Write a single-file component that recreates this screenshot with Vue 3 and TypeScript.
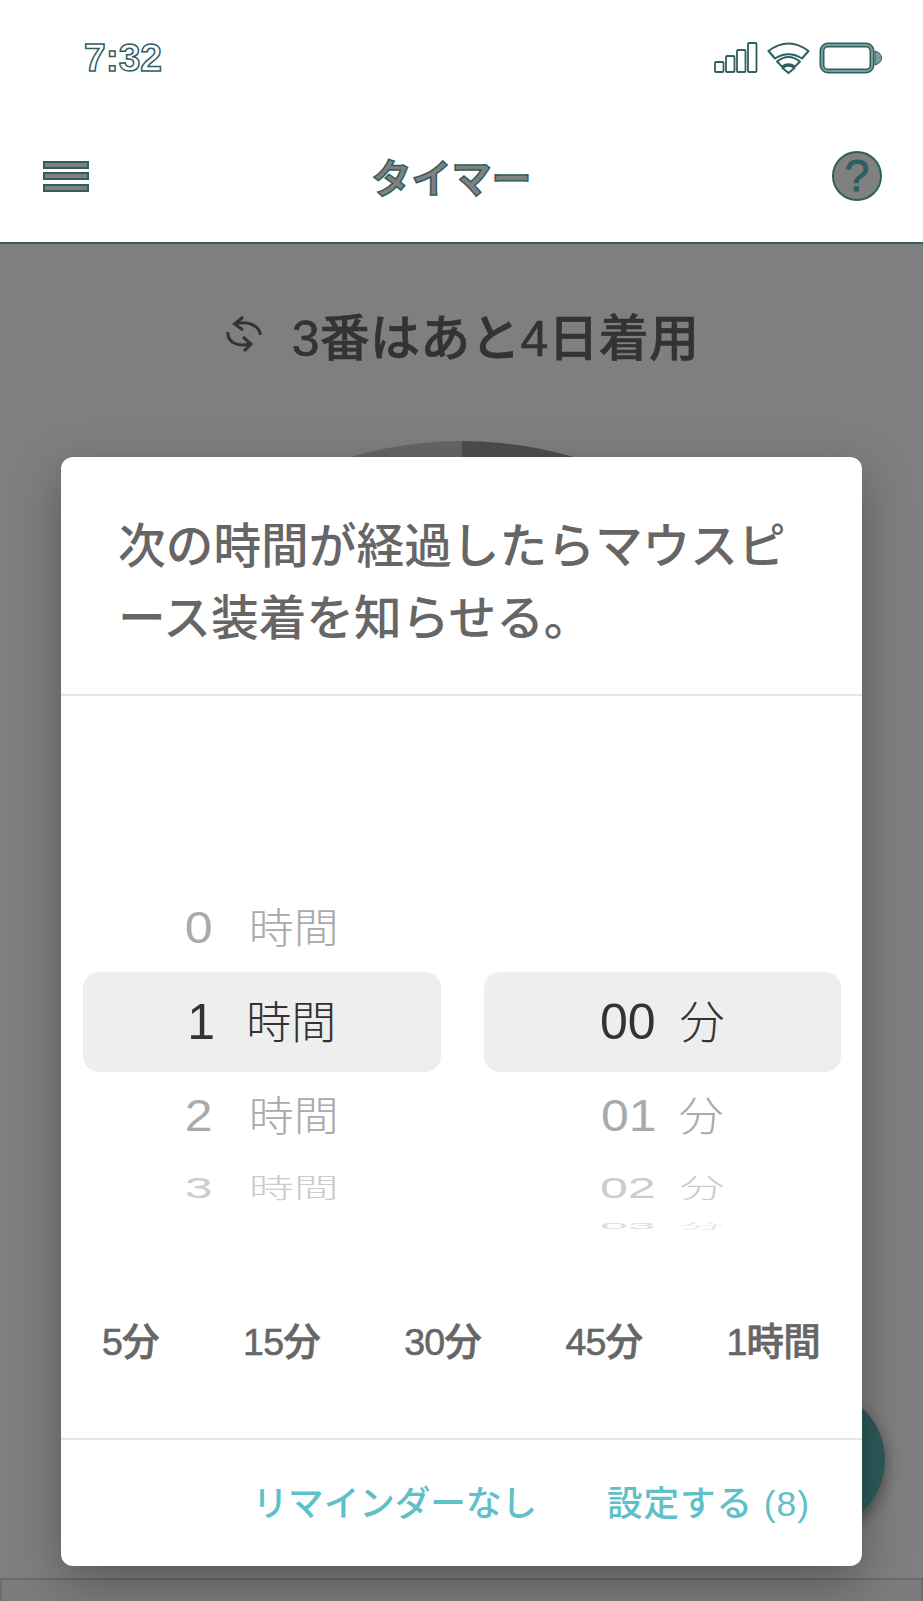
<script setup lang="ts">
type Row = { num: string; unit: string; cls: string };

const hours: Row[] = [
  { num: "", unit: "", cls: "far" },
  { num: "0", unit: "時間", cls: "near" },
  { num: "1", unit: "時間", cls: "sel" },
  { num: "2", unit: "時間", cls: "near" },
  { num: "3", unit: "時間", cls: "far" },
  { num: "", unit: "", cls: "edge" },
];

const minutes: Row[] = [
  { num: "", unit: "", cls: "far" },
  { num: "", unit: "", cls: "near" },
  { num: "00", unit: "分", cls: "sel" },
  { num: "01", unit: "分", cls: "near" },
  { num: "02", unit: "分", cls: "far" },
  { num: "03", unit: "分", cls: "edge" },
];

const presets: string[] = ["5分", "15分", "30分", "45分", "1時間"];
</script>

<template>
  <main class="page">
    <div class="status">
      <span class="time">7:32</span>
      <div class="status-icons">
        <svg width="44" height="31" viewBox="0 0 44 31">
          <g fill="#fff" stroke="#2f5f5f" stroke-width="1.8">
            <rect x="1" y="20" width="8.5" height="10" rx="1" />
            <rect x="12" y="14" width="8.5" height="16" rx="1" />
            <rect x="23" y="8" width="8.5" height="22" rx="1" />
            <rect x="34" y="1" width="8.5" height="29" rx="1" />
          </g>
        </svg>
        <svg width="43" height="32" viewBox="0 0 43 32">
          <g fill="#fff" stroke="#2f5f5f" stroke-width="2" stroke-linejoin="round">
            <path d="M1.5 9 Q21.5 -6 41.5 9 L35 16.5 Q21.5 8 8 16.5 Z" />
            <path d="M10 19.5 Q21.5 10.5 33 19.5 L28 24.5 Q21.5 20 15 24.5 Z" />
            <path d="M15.5 26 Q21.5 21.5 27.5 26 L21.5 31 Z" />
          </g>
        </svg>
        <svg width="63" height="32" viewBox="0 0 63 32">
          <rect x="3" y="3" width="50" height="26" rx="6" fill="#fff" stroke="#2f5f5f" stroke-width="5" />
          <rect x="3" y="3" width="50" height="26" rx="6" fill="none" stroke="#7a9e9e" stroke-width="2" />
          <path d="M56 9 Q62.5 11 62.5 16 Q62.5 21 56 23 Z" fill="#7a9e9e" stroke="#2f5f5f" stroke-width="1" />
        </svg>
      </div>
    </div>

    <header class="nav">
      <div class="burger"><i></i><i></i><i></i></div>
      <h1 class="nav-title">タイマー</h1>
      <div class="help">?</div>
    </header>

    <section class="content">
      <div class="wear">
        <svg class="wear-icon" width="36" height="38" viewBox="0 0 36 38" fill="none" stroke="#666" stroke-width="3">
          <path d="M9 9 C20 6 33 9 34.5 20" />
          <path d="M17 2 L8.5 9 L17 15" />
          <path d="M2 17 C1 28 13 32 24 29" />
          <path d="M17 22 L25 29 L18 36" />
        </svg>
        <span>3番はあと4日着用</span>
      </div>
      <div class="dial"></div>
    </section>

    <div class="fab"></div>
    <div class="bottom-bar"></div>
    <div class="scrim"></div>

    <div class="modal">
      <p class="modal-text">次の時間が経過したらマウスピース装着を知らせる。</p>
      <div class="picker">
        <div v-for="(col, i) in [hours, minutes]" :key="i" class="wheel">
          <div v-for="(row, j) in col" :key="j" class="row" :class="row.cls">
            <div class="row-inner" :class="'col' + i">
              <span class="num">{{ row.num }}</span><span class="unit">{{ row.unit }}</span>
            </div>
          </div>
        </div>
      </div>
      <div class="presets">
        <span v-for="p in presets" :key="p">{{ p }}</span>
      </div>
      <div class="actions">
        <span>リマインダーなし</span>
        <span class="confirm">設定する (8)</span>
      </div>
    </div>
  </main>
</template>

<style scoped>
.page {
  position: relative;
  width: 923px;
  height: 1601px;
  overflow: hidden;
  background: #fff;
  font-family: "Liberation Sans", "Noto Sans CJK JP", sans-serif;
}

.status {
  height: 100px;
  display: flex;
  justify-content: space-between;
  padding: 42px 41px 0 84px;
  box-sizing: border-box;
}
.time {
  font-weight: 700;
  font-size: 39px;
  line-height: 32px;
  color: #fff;
  -webkit-text-stroke: 1.5px #2f5f5f;
}
.status-icons {
  display: flex;
  gap: 9px;
  align-items: flex-start;
}

.nav {
  height: 144px;
  box-sizing: border-box;
  border-bottom: 2px solid #2f5f5f;
  display: flex;
  align-items: center;
  justify-content: space-between;
  padding: 10px 41px 0 43px;
}
.burger {
  width: 46px;
  display: flex;
  flex-direction: column;
  gap: 3.5px;
}
.burger i {
  display: block;
  height: 8px;
  background: #808080;
  border: 2px solid #2f5f5f;
  box-sizing: border-box;
}
.nav-title {
  margin: 0 18px 0 0;
  font-size: 40px;
  font-weight: 700;
  color: #808080;
  -webkit-text-stroke: 1.5px #2f5f5f;
}
.help {
  width: 50px;
  height: 50px;
  border-radius: 50%;
  background: #808080;
  border: 2px solid #2f5f5f;
  box-sizing: border-box;
  color: #2f5f5f;
  font-size: 44px;
  line-height: 46px;
  text-align: center;
  -webkit-text-stroke: 1px #2f5f5f;
}

.content {
  padding-top: 60px;
}
.wear {
  display: flex;
  align-items: center;
  justify-content: center;
  gap: 30px;
  height: 60px;
  font-size: 50px;
  font-weight: 500;
  color: #666;
  padding-left: 2px;
}
.wear span {
  letter-spacing: 0.2px;
  -webkit-text-stroke: 0.6px #666;
}
.dial {
  width: 800px;
  height: 800px;
  border-radius: 50%;
  margin: 77px 0 0 62px;
  background: linear-gradient(90deg, #cdcdcd 50%, #9a9a9a 50%);
}

.fab {
  position: absolute;
  left: 745px;
  top: 1390px;
  width: 140px;
  height: 140px;
  border-radius: 50%;
  background: #5ab4b4;
  box-shadow: 0 6px 16px rgba(0, 0, 0, 0.4);
}
.bottom-bar {
  position: absolute;
  left: 0;
  right: 0;
  top: 1578px;
  bottom: 0;
  background: #f8f8f8;
  border: 2px solid #d8d8d8;
  border-bottom: 0;
  box-sizing: border-box;
}
.scrim {
  position: absolute;
  inset: 244px 0 0 0;
  background: rgba(0, 0, 0, 0.5);
}

.modal {
  position: absolute;
  left: 61px;
  top: 457px;
  width: 801px;
  height: 1109px;
  background: #fff;
  border-radius: 12px;
  box-shadow: 0 16px 50px rgba(0, 0, 0, 0.3);
  display: flex;
  flex-direction: column;
}
.modal-text {
  margin: 0;
  height: 239px;
  box-sizing: border-box;
  padding: 50px 54px 0 57px;
  border-bottom: 2px solid #e6e6e6;
  font-family: "Noto Sans CJK JP", sans-serif;
  font-size: 47.7px;
  line-height: 72px;
  font-weight: 500;
  color: #666;
}

.picker {
  display: flex;
  gap: 43px;
  padding: 132px 21px 0 22px;
  height: 599px;
  box-sizing: border-box;
}
.wheel {
  flex: 1;
}
.row {
  display: flex;
  align-items: center;
  justify-content: center;
  color: #333;
}
.row-inner {
  display: flex;
  align-items: center;
  justify-content: center;
}
.num {
  font-size: 50px;
  line-height: 1;
}
.unit {
  font-family: "Noto Sans CJK JP", sans-serif;
  font-size: 45px;
  line-height: 1;
  font-weight: 300;
  margin-bottom: 5px;
}
.col0 .num {
  margin-right: 36px;
}
.col1 .num {
  margin-right: 24px;
}
.sel .col0 .num {
  margin-right: 31px;
}
.near .col1 .num {
  margin-right: 22px;
}
.sel {
  height: 100px;
  background: #eee;
  border-radius: 16px;
}
.near {
  height: 88px;
  color: #aaa;
}
.near .row-inner {
  transform: scaleY(0.9);
}
.far {
  height: 56px;
  color: #ccc;
}
.far .row-inner {
  transform: scaleY(0.6);
}
.edge {
  height: 20px;
  color: #ddd;
}
.edge .row-inner {
  transform: scaleY(0.18);
}

.presets {
  display: flex;
  justify-content: space-between;
  align-items: center;
  height: 86px;
  padding: 0 42px 0 41px;
  font-size: 37.5px;
  font-weight: 500;
  letter-spacing: -0.8px;
  color: #666;
  -webkit-text-stroke: 0.6px #666;
}

.actions {
  margin-top: auto;
  height: 128px;
  box-sizing: border-box;
  border-top: 2px solid #e6e6e6;
  display: flex;
  align-items: center;
  justify-content: flex-end;
  gap: 70px;
  padding: 0 52px 6px 0;
  font-size: 35.6px;
  font-weight: 500;
  color: #5fc0c8;
}
.confirm {
  letter-spacing: 0.9px;
}
</style>

<style>
body {
  background: #fff;
}
</style>
